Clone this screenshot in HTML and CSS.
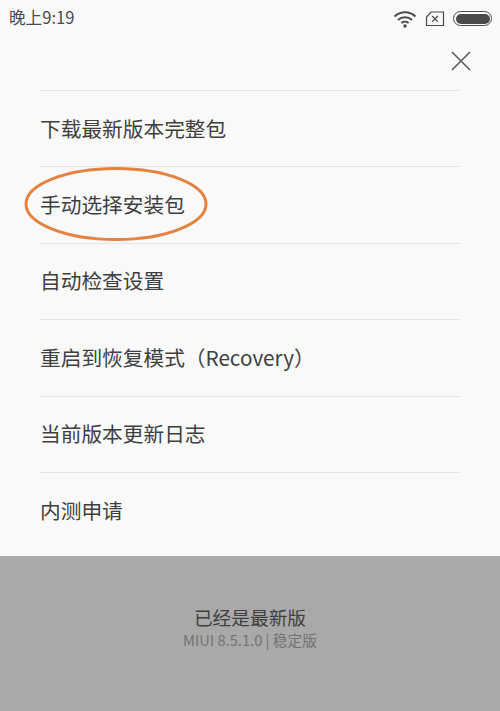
FILE: index.html
```html
<!DOCTYPE html>
<html lang="zh-CN">
<head>
<meta charset="utf-8">
<title>更新选项</title>
<link rel="stylesheet" href="styles.css">
</head>
<body>
<div class="screen">
  <div class="sheet">
    <div class="status">
      <span class="time">晚上9:19</span>
      <div class="status-icons">
        <svg class="wifi" width="24" height="20" viewBox="0 0 24 20" fill="none" stroke="#4a4a4a" stroke-width="2">
          <path d="M1.5 7.5C7.5 1.8 16.5 1.8 22.5 7.5"/>
          <path d="M5 11C9 7.4 15 7.4 19 11"/>
          <path d="M8.4 14C10.4 12.4 13.6 12.4 15.6 14"/>
          <circle cx="12" cy="17" r="1.7" fill="#4a4a4a" stroke="none"/>
        </svg>
        <svg class="sim" width="20" height="16" viewBox="0 0 20 16" fill="none" stroke="#4a4a4a">
          <path d="M6 1H18.5V14.5H1.5V6Z" stroke-width="1.2"/>
          <path d="M7.2 5L12.8 10.6M12.8 5L7.2 10.6" stroke-width="1.3"/>
        </svg>
        <div class="battery"><div class="battery-fill"></div></div>
      </div>
    </div>
    <div class="close-row">
      <svg width="20" height="20" viewBox="0 0 20 20" fill="none" stroke="#5a5a5a" stroke-width="1.6">
        <path d="M1 1L19 19M19 1L1 19"/>
      </svg>
    </div>
    <ul class="menu">
      <li>下载最新版本完整包</li>
      <li class="circled">手动选择安装包
        <svg class="ring" width="184" height="76" viewBox="0 0 184 76" fill="none" stroke="#e58240" stroke-width="3">
          <ellipse cx="92" cy="38" rx="90" ry="35.5"/>
        </svg>
      </li>
      <li>自动检查设置</li>
      <li>重启到恢复模式（Recovery）</li>
      <li>当前版本更新日志</li>
      <li>内测申请</li>
    </ul>
  </div>
  <div class="footer">
    <div class="footer-title">已经是最新版</div>
    <div class="footer-sub">MIUI 8.5.1.0 | 稳定版</div>
  </div>
</div>
</body>
</html>
```
FILE: styles.css
```css
* { box-sizing: border-box; }
html, body { margin: 0; padding: 0; }
body {
  width: 500px;
  height: 711px;
  overflow: hidden;
  font-family: "Noto Sans CJK SC", "Noto Sans", sans-serif;
  background: #f9f9f9;
}
.screen { display: flex; flex-direction: column; height: 711px; }
.sheet { height: 556px; background: #f9f9f9; }
.status {
  height: 37px;
  padding: 0 8px 0 9px;
  display: flex;
  align-items: center;
  justify-content: space-between;
}
.time { font-size: 16.6px; color: #4a4a4a; line-height: 35px; height: 37px; }
.status-icons { display: flex; align-items: center; gap: 8px; }
.battery {
  width: 39px;
  height: 15px;
  border: 1.3px solid #4a4a4a;
  border-radius: 8px;
  padding: 1.5px;
}
.battery-fill { height: 100%; width: 100%; background: #4a4a4a; border-radius: 5px; }
.close-row {
  height: 53px;
  padding: 14px 29px 0 0;
  display: flex;
  justify-content: flex-end;
  align-items: flex-start;
}
.menu { list-style: none; margin: 0 40px; padding: 0; }
.menu li {
  position: relative;
  height: 76.4px;
  padding-bottom: 2px;
  border-top: 1px solid #e4e4e4;
  display: flex;
  align-items: center;
  font-size: 20.7px;
  color: #404040;
}
.ring { position: absolute; left: -16px; top: -1px; }
.footer {
  flex: 1;
  background: #a9a9a9;
  padding-top: 48px;
  text-align: center;
}
.footer-title { font-size: 18.7px; line-height: 26px; color: #3f3f3f; }
.footer-sub { font-size: 14.7px; line-height: 19px; color: #737373; }
```
